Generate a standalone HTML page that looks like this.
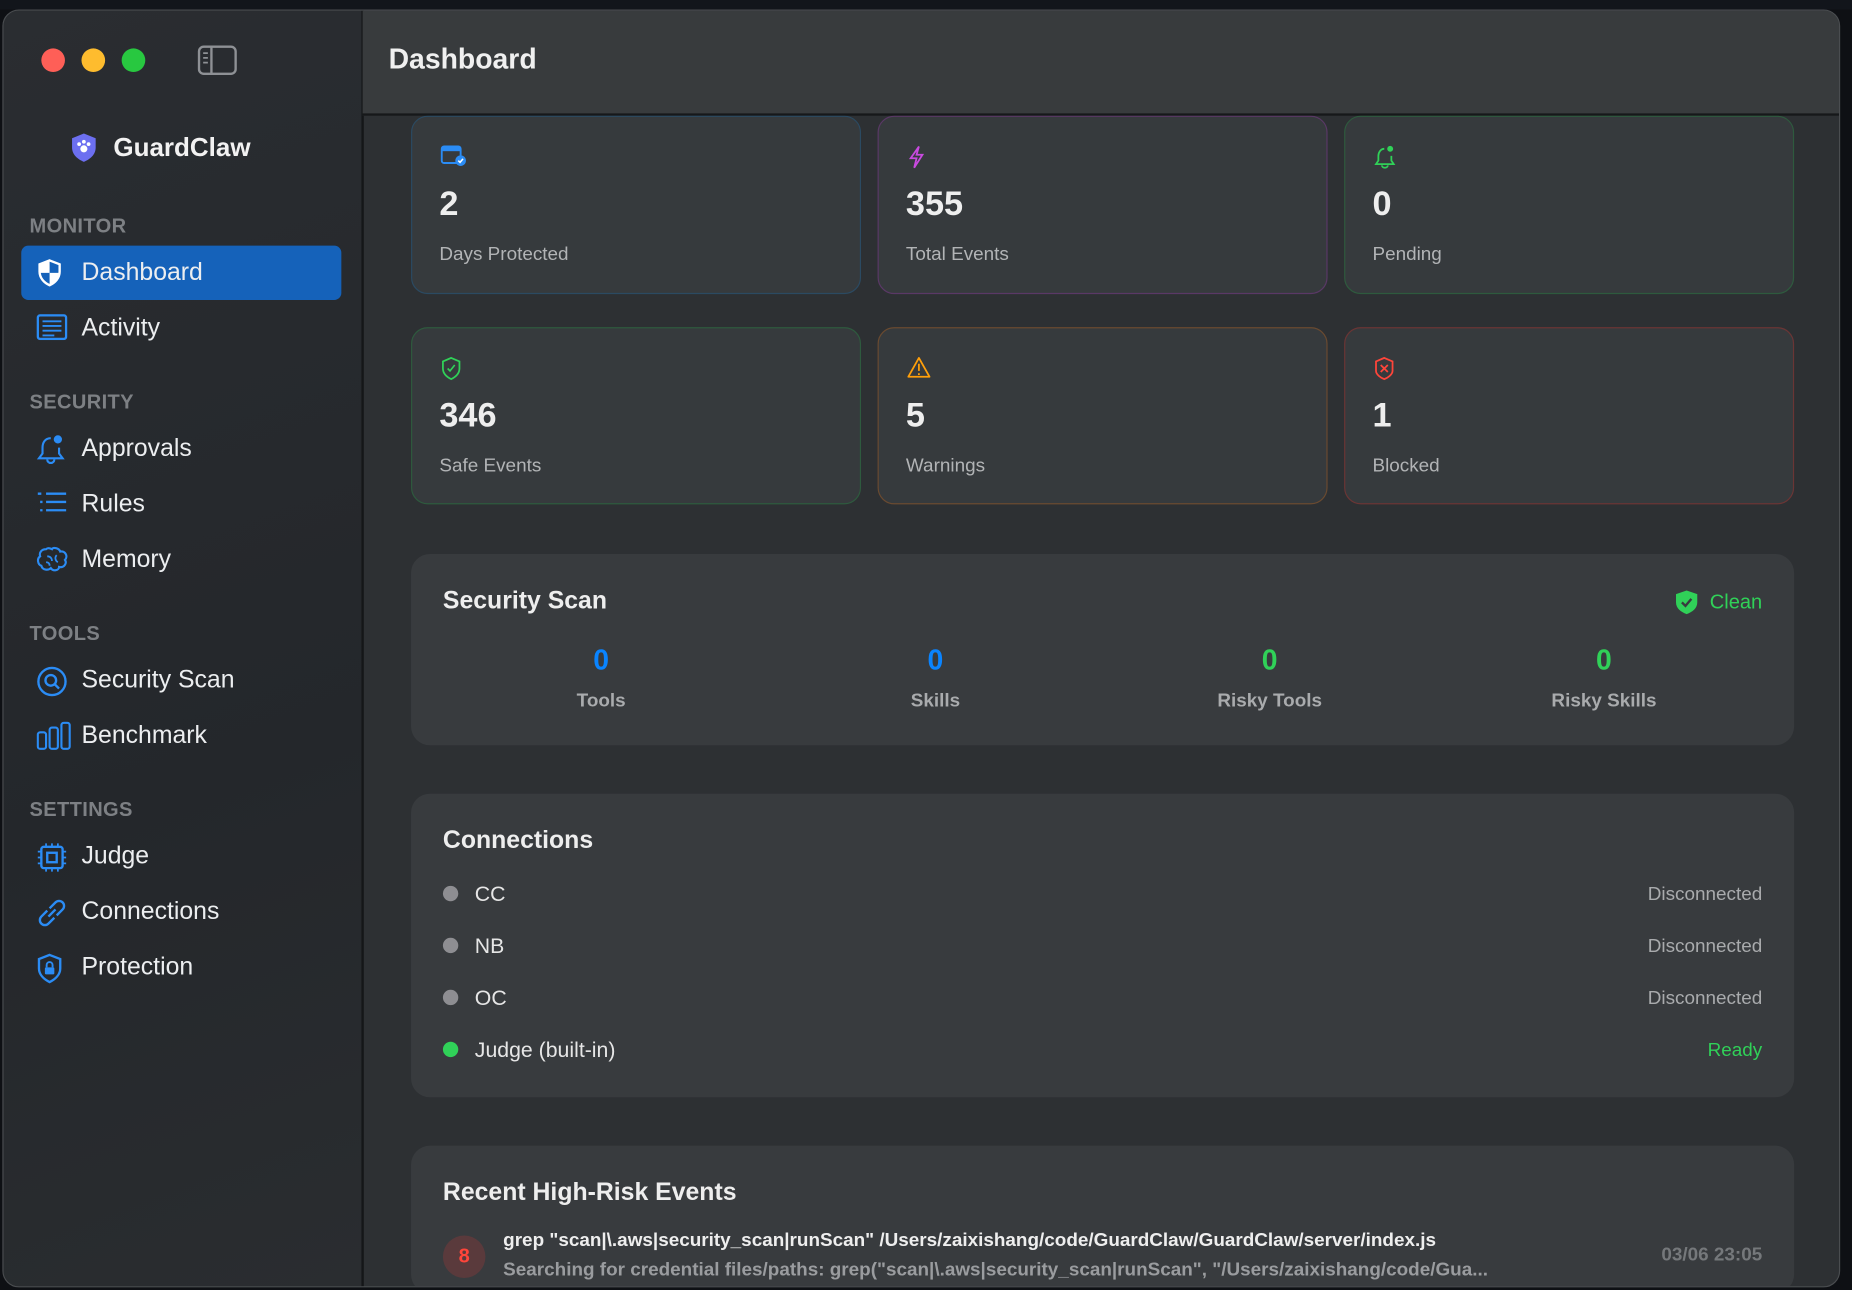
<!DOCTYPE html>
<html><head><meta charset="utf-8"><style>
html,body{margin:0;padding:0;width:1852px;height:1290px;overflow:hidden;background:#0e1014;}
#w{position:absolute;left:0;top:0;width:1568px;height:1092px;transform:scale(1.18112);transform-origin:0 0;font-family:"Liberation Sans",sans-serif;overflow:hidden;}
.topstrip{position:absolute;left:0;top:0;width:1568px;height:8px;background:#12151b;}
.win{position:absolute;left:2px;top:8px;width:1556px;height:1082px;border-radius:14px;overflow:hidden;background:#2d3033;border:1px solid #4a4d50;box-sizing:border-box;}
.side{position:absolute;left:0;top:0;width:303px;height:100%;background:linear-gradient(160deg,#2a2d31,#24272b 60%,#2a2d30);border-right:2px solid #141618;}
.dot{position:absolute;top:32px;width:20px;height:20px;border-radius:50%;}
.sec{position:absolute;left:22px;font-size:17px;font-weight:bold;color:#7d8084;letter-spacing:.3px;}
.it{position:absolute;left:15px;width:271px;height:46px;color:#eceef0;font-size:21px;line-height:46px;}
.it svg{position:absolute;left:13px;top:11px;}
.it span{position:absolute;left:51px;}
.hdr{position:absolute;left:304px;top:0;right:0;height:87px;background:#383b3d;border-bottom:2px solid #16181a;}
.hdr div{position:absolute;left:22px;top:28px;font-size:24px;font-weight:bold;color:#f0f0f0;}
.card{position:absolute;width:381px;height:151px;border-radius:14px;background:#363a3d;border:1.5px solid;box-sizing:border-box;}
.card svg{position:absolute;left:24px;top:24px;}
.card .n{position:absolute;left:23px;top:58px;font-size:29px;font-weight:bold;color:#eee;}
.card .l{position:absolute;left:23px;top:108px;font-size:16px;color:#b2b4b6;}
.panel{position:absolute;left:345px;width:1171px;border-radius:16px;background:#383b3e;}
.pt{position:absolute;left:27px;font-size:21px;font-weight:bold;color:#eee;}
.col{position:absolute;top:77px;width:200px;text-align:center;}
.col .v{font-size:24px;font-weight:bold;}
.col .k{font-size:16px;font-weight:bold;color:#a9abad;margin-top:11px;}
.row{position:absolute;left:27px;right:27px;height:24px;font-size:18px;color:#e6e6e6;}
.row i{position:absolute;left:0;top:3px;width:13px;height:13px;border-radius:50%;background:#8e8e92;}
.row span{position:absolute;left:27px;top:0;}
.row b{position:absolute;right:0;top:2px;font-weight:normal;font-size:16px;color:#a9abad;}
</style></head><body><div id="w">
<div class="topstrip"></div>
<div class="win">
 <div class="side">
  <div class="dot" style="left:32px;background:#fe5f57"></div>
  <div class="dot" style="left:66px;background:#febc2e"></div>
  <div class="dot" style="left:100px;background:#28c840"></div>
  <svg style="position:absolute;left:164px;top:29px" width="34" height="26" viewBox="0 0 34 26"><rect x="1.5" y="1.5" width="31" height="23" rx="4" fill="none" stroke="#8e9195" stroke-width="2"/><line x1="12" y1="2" x2="12" y2="24" stroke="#8e9195" stroke-width="2"/><path d="M5 7h4M5 11h4M5 15h4" stroke="#8e9195" stroke-width="1.5"/></svg>
  <svg style="position:absolute;left:57px;top:103px" width="22" height="26" viewBox="0 0 22 26"><path d="M11 1 L21 5 V13 C21 19 16 23 11 25 C6 23 1 19 1 13 V5 Z" fill="#6c6ff0"/><circle cx="11" cy="14" r="3" fill="#fff"/><circle cx="7" cy="10" r="1.6" fill="#fff"/><circle cx="15" cy="10" r="1.6" fill="#fff"/><circle cx="11" cy="8" r="1.6" fill="#fff"/></svg>
  <div style="position:absolute;left:93px;top:103px;font-size:22px;font-weight:bold;color:#f2f2f2">GuardClaw</div>
  <div class="sec" style="top:173px">MONITOR</div>
  <div class="it" style="top:199px;background:#1562ba;border-radius:6px"><svg width="22" height="24" viewBox="0 0 22 24"><path d="M11 1.5 L19.5 4.8 V11 C19.5 16.5 15.5 20.5 11 22.5 C6.5 20.5 2.5 16.5 2.5 11 V4.8 Z" fill="none" stroke="#fff" stroke-width="2"/><path d="M11 1.5 V12 H2.5 V4.8 Z" fill="#fff"/><path d="M11 12 H19.5 C19 16.5 15.5 20.5 11 22.5 Z" fill="#fff"/></svg><span>Dashboard</span></div>
  <div class="it" style="top:246px"><svg width="26" height="22" viewBox="0 0 26 22"><rect x="1" y="1" width="24" height="20" rx="2" fill="none" stroke="#2b8cf5" stroke-width="2"/><path d="M5 6h16M5 10h16M5 14h16M5 18h10" stroke="#2b8cf5" stroke-width="1.6"/></svg><span>Activity</span></div>
  <div class="sec" style="top:322px">SECURITY</div>
  <div class="it" style="top:348px"><svg width="24" height="26" viewBox="0 0 24 26"><path d="M12 3 C7 3 5 7 5 11 V16 L2 20 H22 L19 16 V11" fill="none" stroke="#2b8cf5" stroke-width="1.8"/><path d="M9 21 a3 3 0 0 0 6 0" fill="none" stroke="#2b8cf5" stroke-width="1.8"/><circle cx="18" cy="4" r="3.5" fill="#2b8cf5"/></svg><span>Approvals</span></div>
  <div class="it" style="top:395px"><svg width="26" height="20" viewBox="0 0 26 20"><path d="M8 3h17M8 10h17M8 17h17" stroke="#2b8cf5" stroke-width="2"/><path d="M1 3h3M3 10h2M3 17h2" stroke="#2b8cf5" stroke-width="2"/></svg><span>Rules</span></div>
  <div class="it" style="top:442px"><svg width="28" height="24" viewBox="0 0 28 24"><path d="M8 3 C4 3 2 6 3 9 C0 11 1 16 4 17 C5 21 10 21 12 19 C14 22 19 21 19 18 C23 19 26 15 24 12 C27 9 24 4 20 5 C19 2 14 1 13 3 C11 2 9 2 8 3Z" fill="none" stroke="#2b8cf5" stroke-width="1.8"/><path d="M9 9c3 0 4 2 4 4M17 8c-2 2-1 5 1 6M8 14c2 0 3 1 3 3" fill="none" stroke="#2b8cf5" stroke-width="1.5"/></svg><span>Memory</span></div>
  <div class="sec" style="top:518px">TOOLS</div>
  <div class="it" style="top:544px"><svg width="26" height="26" viewBox="0 0 26 26"><circle cx="13" cy="13" r="11.5" fill="none" stroke="#2b8cf5" stroke-width="2"/><circle cx="12" cy="12" r="4.5" fill="none" stroke="#2b8cf5" stroke-width="2"/><path d="M15 15l4 4" stroke="#2b8cf5" stroke-width="2"/></svg><span>Security Scan</span></div>
  <div class="it" style="top:591px"><svg width="30" height="24" viewBox="0 0 30 24"><rect x="1" y="9" width="7" height="14" rx="2" fill="none" stroke="#2b8cf5" stroke-width="1.8"/><rect x="11" y="5" width="7" height="18" rx="2" fill="none" stroke="#2b8cf5" stroke-width="1.8"/><rect x="21" y="1" width="7" height="22" rx="2" fill="none" stroke="#2b8cf5" stroke-width="1.8"/></svg><span>Benchmark</span></div>
  <div class="sec" style="top:667px">SETTINGS</div>
  <div class="it" style="top:693px"><svg width="26" height="26" viewBox="0 0 26 26"><rect x="4" y="4" width="18" height="18" rx="2" fill="none" stroke="#2b8cf5" stroke-width="2"/><rect x="9" y="9" width="8" height="8" fill="none" stroke="#2b8cf5" stroke-width="2"/><path d="M8 1v3M13 1v3M18 1v3M8 22v3M13 22v3M18 22v3M1 8h3M1 13h3M1 18h3M22 8h3M22 13h3M22 18h3" stroke="#2b8cf5" stroke-width="1.5"/></svg><span>Judge</span></div>
  <div class="it" style="top:740px"><svg width="26" height="26" viewBox="0 0 26 26"><path d="M11 9 L16 4 a4 4 0 0 1 6 6 L17 15" fill="none" stroke="#2b8cf5" stroke-width="2"/><path d="M15 17 L10 22 a4 4 0 0 1 -6 -6 L9 11" fill="none" stroke="#2b8cf5" stroke-width="2"/><path d="M10 16 L16 10" stroke="#2b8cf5" stroke-width="2"/></svg><span>Connections</span></div>
  <div class="it" style="top:787px"><svg width="22" height="26" viewBox="0 0 22 26"><path d="M11 1.5 L20 5 V13 C20 18 16 22 11 24.5 C6 22 2 18 2 13 V5 Z" fill="none" stroke="#2b8cf5" stroke-width="2"/><rect x="7" y="12" width="8" height="6" rx="1" fill="#2b8cf5"/><path d="M8.5 12 V10 a2.5 2.5 0 0 1 5 0 V12" fill="none" stroke="#2b8cf5" stroke-width="1.6"/></svg><span>Protection</span></div>
 </div>
 <div class="hdr"><div>Dashboard</div></div>

 <div class="card" style="left:345px;top:89px;border-color:#2b4a62"><svg width="22" height="18" viewBox="0 0 22 18"><rect x="1" y="1" width="16" height="14" rx="2" fill="none" stroke="#2b8cf5" stroke-width="1.6"/><rect x="1" y="1" width="16" height="4" fill="#2b8cf5"/><circle cx="17" cy="13" r="4.5" fill="#2b8cf5"/><path d="M15 13l1.5 1.5 2.5-3" stroke="#fff" stroke-width="1.3" fill="none"/></svg><div class="n">2</div><div class="l">Days Protected</div></div>
 <div class="card" style="left:740px;top:89px;border-color:#5a3866"><svg width="16" height="20" viewBox="0 0 16 20"><path d="M10 1 L3 11 H8 L6 19 L13 8 H8 Z" fill="none" stroke="#c94ae0" stroke-width="1.5"/></svg><div class="n">355</div><div class="l">Total Events</div></div>
 <div class="card" style="left:1135px;top:89px;border-color:#2e5a3e"><svg width="20" height="20" viewBox="0 0 20 20"><path d="M9 3 C6 3 4 6 4 9 V13 L2 16 H17 L15 13 V9" fill="none" stroke="#30d158" stroke-width="1.5"/><path d="M7 17 a2.5 2 0 0 0 5 0" fill="none" stroke="#30d158" stroke-width="1.5"/><circle cx="14" cy="3" r="2.5" fill="#30d158"/></svg><div class="n">0</div><div class="l">Pending</div></div>

 <div class="card" style="left:345px;top:268px;border-color:#2e5a3e;height:150px"><svg width="18" height="20" viewBox="0 0 18 20"><path d="M9 1 L16 4 V10 C16 14 13 17 9 19 C5 17 2 14 2 10 V4 Z" fill="none" stroke="#30d158" stroke-width="1.5"/><path d="M6 10l2 2 4-5" fill="none" stroke="#30d158" stroke-width="1.4"/></svg><div class="n">346</div><div class="l">Safe Events</div></div>
 <div class="card" style="left:740px;top:268px;border-color:#6a4a30;height:150px"><svg width="20" height="18" viewBox="0 0 20 18"><path d="M10 1 L19 17 H1 Z" fill="none" stroke="#ff9f0a" stroke-width="1.5" stroke-linejoin="round"/><path d="M10 6v6M10 14v1.5" stroke="#ff9f0a" stroke-width="1.5"/></svg><div class="n">5</div><div class="l">Warnings</div></div>
 <div class="card" style="left:1135px;top:268px;border-color:#6a3535;height:150px"><svg width="18" height="20" viewBox="0 0 18 20"><path d="M9 1 L16 4 V12 C16 15 12 18 9 19 C6 18 2 15 2 12 V4 Z" fill="none" stroke="#ff453a" stroke-width="1.5"/><path d="M6 7l6 6M12 7l-6 6" stroke="#ff453a" stroke-width="1.5"/></svg><div class="n">1</div><div class="l">Blocked</div></div>

 <div class="panel" style="top:460px;height:162px">
  <div class="pt" style="top:28px">Security Scan</div>
  <svg style="position:absolute;left:1070px;top:30px" width="20" height="22" viewBox="0 0 20 22"><path d="M10 1 L19 4 V11 C19 16 15 19 10 21 C5 19 1 16 1 11 V4 Z" fill="#30d158"/><path d="M6 11l3 3 5-6" stroke="#383b3e" stroke-width="2" fill="none"/></svg>
  <div style="position:absolute;right:27px;top:31px;color:#30d158;font-size:17px">Clean</div>
  <div class="col" style="left:61px"><div class="v" style="color:#0a84ff">0</div><div class="k">Tools</div></div>
  <div class="col" style="left:344px"><div class="v" style="color:#0a84ff">0</div><div class="k">Skills</div></div>
  <div class="col" style="left:627px"><div class="v" style="color:#30d158">0</div><div class="k">Risky Tools</div></div>
  <div class="col" style="left:910px"><div class="v" style="color:#30d158">0</div><div class="k">Risky Skills</div></div>
 </div>

 <div class="panel" style="top:663px;height:257px">
  <div class="pt" style="top:28px">Connections</div>
  <div class="row" style="top:75px"><i></i><span>CC</span><b>Disconnected</b></div>
  <div class="row" style="top:119px"><i></i><span>NB</span><b>Disconnected</b></div>
  <div class="row" style="top:163px"><i></i><span>OC</span><b>Disconnected</b></div>
  <div class="row" style="top:207px"><i style="background:#30d158"></i><span>Judge (built-in)</span><b style="color:#30d158">Ready</b></div>
 </div>

 <div class="panel" style="top:961px;height:125px">
  <div class="pt" style="top:28px">Recent High-Risk Events</div>
  <div style="position:absolute;left:27px;top:76px;width:36px;height:36px;border-radius:50%;background:#5a3a3c;color:#ff453a;text-align:center;line-height:36px;font-size:17px;font-weight:bold">8</div>
  <div style="position:absolute;left:78px;top:72px;color:#eee;font-size:16px;font-weight:bold;white-space:nowrap">grep "scan|\.aws|security_scan|runScan" /Users/zaixishang/code/GuardClaw/GuardClaw/server/index.js</div>
  <div style="position:absolute;left:78px;top:97px;color:#9a9c9f;font-size:16px;font-weight:bold;white-space:nowrap">Searching for credential files/paths: grep("scan|\.aws|security_scan|runScan", "/Users/zaixishang/code/Gua...</div>
  <div style="position:absolute;right:27px;top:84px;color:#75787b;font-size:16px;font-weight:bold">03/06 23:05</div>
 </div>
</div>
</div></body></html>
